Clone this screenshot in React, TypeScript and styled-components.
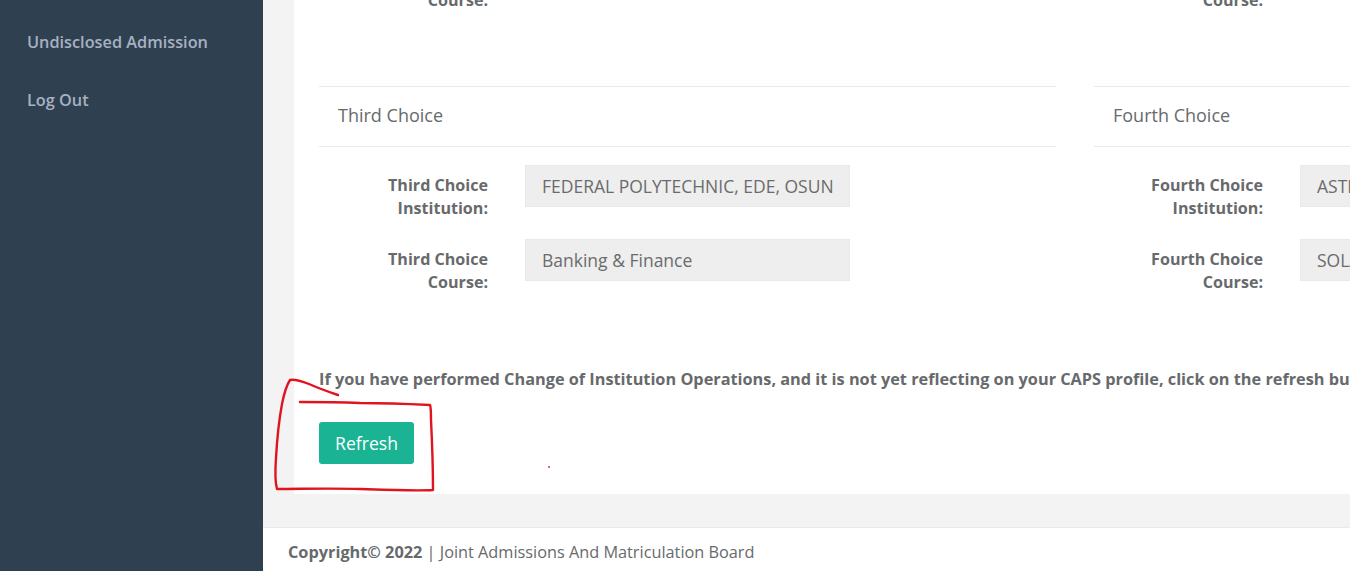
import React from "react";
import styled, { createGlobalStyle } from "styled-components";

const GlobalStyle = createGlobalStyle`
  html, body {
    margin: 0;
    padding: 0;
    height: 100%;
    overflow: hidden;
  }
  body {
    font-family: "Open Sans", "Liberation Sans", Arial, sans-serif;
    color: #676a6c;
    font-size: 16.3px;
  }
`;

type Choice = {
  title: string;
  institution: string;
  course: string;
};

const rows: Choice[][] = [
  [
    {
      title: "First Choice",
      institution: "UNIVERSITY OF IBADAN, IBADAN",
      course: "Accounting",
    },
    {
      title: "Second Choice",
      institution: "OSUN STATE UNIVERSITY, OSOGBO",
      course: "Business Administration",
    },
  ],
  [
    {
      title: "Third Choice",
      institution: "FEDERAL POLYTECHNIC, EDE, OSUN",
      course: "Banking & Finance",
    },
    {
      title: "Fourth Choice",
      institution: "ASTRAL POLYTECHNIC",
      course: "SOLAR ENERGY TECHNOLOGY",
    },
  ],
];

const sideLinks = ["Undisclosed Admission", "Log Out"];

const App = () => {
  return (
    <>
      <GlobalStyle />
      <Layout>
        <Sidebar>
          <NavList>
            {sideLinks.map((link) => (
              <NavItem key={link}>{link}</NavItem>
            ))}
          </NavList>
        </Sidebar>

        <Main>
          <ScrollArea>
            <Wrapper>
              <Panel>
                {rows.map((pair, i) => (
                  <ChoiceRow key={i}>
                    {pair.map((choice) => (
                      <Section key={choice.title}>
                        <SectionHeader>{choice.title}</SectionHeader>
                        <SectionBody>
                          <FieldRow>
                            <FieldLabel>
                              {choice.title}
                              <br />
                              Institution:
                            </FieldLabel>
                            <FieldValue>{choice.institution}</FieldValue>
                          </FieldRow>
                          <FieldRow>
                            <FieldLabel>
                              {choice.title}
                              <br />
                              Course:
                            </FieldLabel>
                            <FieldValue>{choice.course}</FieldValue>
                          </FieldRow>
                        </SectionBody>
                      </Section>
                    ))}
                  </ChoiceRow>
                ))}

                <Notice>
                  If you have performed Change of Institution Operations, and it
                  is not yet reflecting on your CAPS profile, click on the
                  refresh button below to update your profile.
                </Notice>
                <RefreshButton type="button">Refresh</RefreshButton>
              </Panel>
            </Wrapper>
          </ScrollArea>

          <Footer>
            <strong>Copyright© 2022</strong> | Joint Admissions And
            Matriculation Board
          </Footer>
        </Main>

        {/* hand-drawn red marking around the button */}
        <Scribble
          width="1350"
          height="571"
          viewBox="0 0 1350 571"
          aria-hidden="true"
        >
          <path
            d="M338 395 C326 391 318 388 309 384 C301 381 294 379 290 380 C286 386 284 394 282 404 C279 420 277 440 276 458 C275 472 275 482 277 489 C300 489 330 488 360 489 C390 490 415 491 433 490 C433 470 432 440 431 420 C431 412 431 407 430 405 C410 404 385 403 360 403 C335 402 315 402 300 402"
            fill="none"
            stroke="#e0141e"
            strokeWidth="2.4"
            strokeLinecap="round"
            strokeLinejoin="round"
          />
          <circle cx="549" cy="467" r="0.9" fill="#d02030" />
        </Scribble>
      </Layout>
    </>
  );
};

export default App;

const Layout = styled.div`
  display: flex;
  width: 100vw;
  height: 100vh;
  overflow: hidden;
`;

const Sidebar = styled.nav`
  flex: 0 0 263px;
  background-color: #2f4050;
`;

const NavList = styled.ul`
  list-style: none;
  margin: 0;
  padding: 13px 0 0;
`;

const NavItem = styled.li`
  height: 58px;
  line-height: 58px;
  padding-left: 27px;
  color: #a7b1c2;
  font-weight: 600;
  font-size: 16.3px;
  white-space: nowrap;
`;

const Main = styled.div`
  flex: 1;
  min-width: 0;
  display: flex;
  flex-direction: column;
  background-color: #f3f3f4;
`;

const ScrollArea = styled.div`
  flex: 1;
  min-height: 0;
  overflow: hidden;
  display: flex;
  flex-direction: column;
  justify-content: flex-end;
`;

const Wrapper = styled.div`
  padding: 0 0 33px 31px;
`;

const Panel = styled.div`
  background-color: #ffffff;
  padding: 30px 25px 30px 25px;
  width: 1600px;
`;

const ChoiceRow = styled.div`
  display: flex;
  gap: 38px;
`;

const Section = styled.div`
  flex: 0 0 737px;
`;

const SectionHeader = styled.div`
  height: 59px;
  line-height: 57px;
  border-top: 1px solid #e7eaec;
  border-bottom: 1px solid #e7eaec;
  padding-left: 19px;
  font-size: 18px;
  color: #676a6c;
`;

const SectionBody = styled.div`
  padding: 18px 0 75px;
  display: flex;
  flex-direction: column;
  gap: 20px;
`;

const FieldRow = styled.div`
  display: flex;
  align-items: flex-start;
  gap: 37px;
  height: 54px;
`;

const FieldLabel = styled.div`
  flex: 0 0 169px;
  text-align: right;
  padding-top: 9px;
  line-height: 23px;
  font-weight: 700;
  font-size: 16.1px;
  color: #676a6c;
`;

const FieldValue = styled.div`
  flex: 0 0 325px;
  box-sizing: border-box;
  height: 42px;
  line-height: 41px;
  padding: 0 16px;
  background-color: #eeeeee;
  border: 1px solid #e9e9e9;
  font-size: 17.5px;
  color: #6b6b6b;
  white-space: nowrap;
  overflow: hidden;
`;

const Notice = styled.p`
  margin: 0 0 31px;
  line-height: 23px;
  font-weight: 700;
  font-size: 16.3px;
  color: #676a6c;
  white-space: nowrap;
`;

const RefreshButton = styled.button`
  display: block;
  width: 95px;
  height: 42px;
  padding: 0;
  border: none;
  border-radius: 3px;
  background-color: #1ab394;
  color: #ffffff;
  font-family: "Open Sans", "Liberation Sans", Arial, sans-serif;
  font-size: 17.6px;
  cursor: pointer;
`;

const Footer = styled.footer`
  flex: 0 0 auto;
  background-color: #ffffff;
  border-top: 1px solid #e7eaec;
  padding: 13px 25px 7px;
  line-height: 23px;
  font-size: 16.3px;
  color: #676a6c;
  white-space: nowrap;

  strong {
    font-weight: 700;
  }
`;

const Scribble = styled.svg`
  position: fixed;
  top: 0;
  left: 0;
  pointer-events: none;
`;
